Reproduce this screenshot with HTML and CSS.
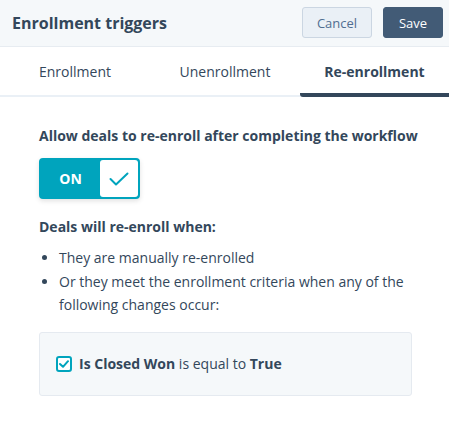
FILE: index.html
```html
<!DOCTYPE html>
<html>
<head>
<meta charset="utf-8">
<link rel="stylesheet" href="styles.css">
</head>
<body>
<div class="header">
  <div class="title">Enrollment triggers</div>
  <div class="actions">
    <button class="btn cancel">Cancel</button>
    <button class="btn save">Save</button>
  </div>
</div>
<div class="tabs">
  <div class="tab">Enrollment</div>
  <div class="tab">Unenrollment</div>
  <div class="tab active">Re-enrollment</div>
</div>
<div class="content">
  <div class="heading">Allow deals to re-enroll after completing the workflow</div>
  <div class="toggle">
    <div class="toggle-on">ON</div>
    <div class="toggle-knob">
      <svg width="20" height="14" viewBox="0 0 20 14"><path d="M1.5 7 L7 12.5 L18.5 1.5" fill="none" stroke="#00a4bd" stroke-width="2" stroke-linecap="round" stroke-linejoin="round"/></svg>
    </div>
  </div>
  <div class="subheading">Deals will re-enroll when:</div>
  <ul class="list">
    <li>They are manually re-enrolled</li>
    <li>Or they meet the enrollment criteria when any of the following changes occur:</li>
  </ul>
  <div class="criteria">
    <span class="checkbox">
      <svg width="10" height="8" viewBox="0 0 10 8"><path d="M1 4 L4 6.8 L9 1.2" fill="none" stroke="#00a4bd" stroke-width="2" stroke-linecap="round" stroke-linejoin="round"/></svg>
    </span>
    <span class="crit-text"><b>Is Closed Won</b> is equal to <b>True</b></span>
  </div>
</div>
</body>
</html>
```
FILE: styles.css
```css
* { box-sizing: border-box; }
body {
  margin: 0;
  font-family: "Open Sans", "Noto Sans", sans-serif;
  color: #33475b;
  background: #fff;
  width: 449px;
}
.header {
  height: 47px;
  background: #f5f8fa;
  border-bottom: 1px solid #e7ecf1;
  display: flex;
  align-items: center;
  justify-content: space-between;
  padding: 0 6px 1px 12px;
}
.title {
  font-size: 16px;
  font-weight: 700;
  color: #33475b;
}
.actions { display: flex; gap: 11px; }
.btn {
  height: 31px;
  border-radius: 3px;
  font-family: inherit;
  font-size: 13px;
  padding: 0;
}
.cancel {
  width: 70px;
  background: #eaf0f6;
  border: 1px solid #cbd6e2;
  color: #506e91;
}
.save {
  width: 60px;
  background: #425b76;
  border: 1px solid #425b76;
  color: #fff;
}
.tabs {
  display: grid;
  grid-template-columns: 150px 150px 149px;
  height: 50px;
  border-bottom: 2px solid #eaf0f6;
}
.tab {
  display: flex;
  align-items: center;
  justify-content: center;
  font-size: 14px;
  color: #33475b;
}
.tab.active {
  font-weight: 700;
  border-bottom: 4px solid #33475b;
  border-bottom-left-radius: 3px;
  margin-bottom: -2px;
  padding-top: 2px;
}
.content { padding: 29px 0 0 39px; }
.heading {
  font-size: 14px;
  font-weight: 700;
  line-height: 20px;
}
.toggle {
  margin-top: 12px;
  width: 101px;
  height: 41px;
  display: flex;
  border: 2px solid #00a4bd;
  border-radius: 4px;
  background: #00a4bd;
  box-shadow: 0 2px 5px rgba(0,0,0,0.12);
}
.toggle-on {
  width: 59px;
  display: flex;
  align-items: center;
  justify-content: center;
  color: #fff;
  font-weight: 700;
  font-size: 14px;
}
.toggle-knob {
  flex: 1;
  background: #fff;
  border-radius: 3px;
  display: flex;
  align-items: center;
  justify-content: center;
}
.subheading {
  margin-top: 18px;
  font-size: 14px;
  font-weight: 700;
  line-height: 20px;
}
.list {
  margin: 9px 0 0 0;
  padding-left: 20px;
  width: 370px;
  font-size: 14px;
  line-height: 23.5px;
}
.criteria {
  margin-top: 15px;
  width: 373px;
  height: 64px;
  background: #f5f8fa;
  border: 1px solid #e5eaf0;
  border-radius: 3px;
  display: flex;
  align-items: center;
  padding-left: 16px;
  gap: 7px;
  font-size: 14px;
}
.checkbox {
  width: 16px;
  height: 16px;
  border: 2px solid #00a4bd;
  border-radius: 3px;
  background: #fff;
  display: flex;
  align-items: center;
  justify-content: center;
}
```
